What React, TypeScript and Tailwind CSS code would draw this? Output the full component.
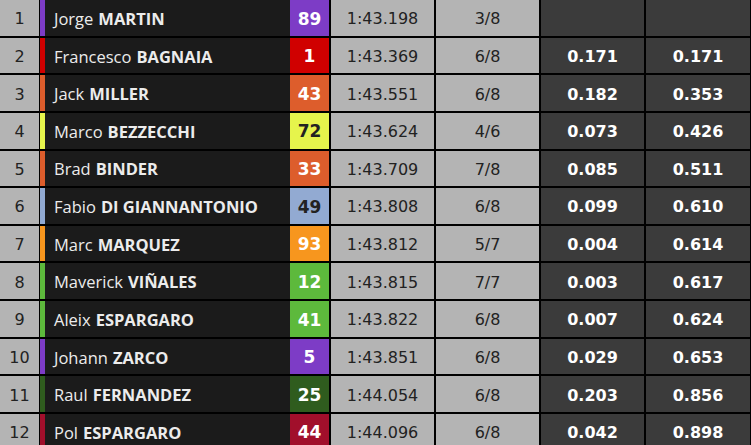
type Row = {
  pos: number;
  first: string;
  last: string;
  num: string;
  stripe: string;
  badge: string;
  time: string;
  laps: string;
  gap: string;
  total: string;
};

const rows: Row[] = [
  { pos: 1, first: "Jorge", last: "MARTIN", num: "89", stripe: "border-l-[#7d3cc6]", badge: "bg-[#7d3cc6] text-white", time: "1:43.198", laps: "3/8", gap: "", total: "" },
  { pos: 2, first: "Francesco", last: "BAGNAIA", num: "1", stripe: "border-l-[#d00000]", badge: "bg-[#d00000] text-white", time: "1:43.369", laps: "6/8", gap: "0.171", total: "0.171" },
  { pos: 3, first: "Jack", last: "MILLER", num: "43", stripe: "border-l-[#dd5d2c]", badge: "bg-[#dd5d2c] text-white", time: "1:43.551", laps: "6/8", gap: "0.182", total: "0.353" },
  { pos: 4, first: "Marco", last: "BEZZECCHI", num: "72", stripe: "border-l-[#e6f44c]", badge: "bg-[#e6f44c] text-[#222]", time: "1:43.624", laps: "4/6", gap: "0.073", total: "0.426" },
  { pos: 5, first: "Brad", last: "BINDER", num: "33", stripe: "border-l-[#dd5d2c]", badge: "bg-[#dd5d2c] text-white", time: "1:43.709", laps: "7/8", gap: "0.085", total: "0.511" },
  { pos: 6, first: "Fabio", last: "DI GIANNANTONIO", num: "49", stripe: "border-l-[#92aad2]", badge: "bg-[#92aad2] text-[#222]", time: "1:43.808", laps: "6/8", gap: "0.099", total: "0.610" },
  { pos: 7, first: "Marc", last: "MARQUEZ", num: "93", stripe: "border-l-[#f7961e]", badge: "bg-[#f7961e] text-white", time: "1:43.812", laps: "5/7", gap: "0.004", total: "0.614" },
  { pos: 8, first: "Maverick", last: "VIÑALES", num: "12", stripe: "border-l-[#5db93c]", badge: "bg-[#5db93c] text-white", time: "1:43.815", laps: "7/7", gap: "0.003", total: "0.617" },
  { pos: 9, first: "Aleix", last: "ESPARGARO", num: "41", stripe: "border-l-[#5db93c]", badge: "bg-[#5db93c] text-white", time: "1:43.822", laps: "6/8", gap: "0.007", total: "0.624" },
  { pos: 10, first: "Johann", last: "ZARCO", num: "5", stripe: "border-l-[#7d3cc6]", badge: "bg-[#7d3cc6] text-white", time: "1:43.851", laps: "6/8", gap: "0.029", total: "0.653" },
  { pos: 11, first: "Raul", last: "FERNANDEZ", num: "25", stripe: "border-l-[#2f5c1e]", badge: "bg-[#2f5c1e] text-white", time: "1:44.054", laps: "6/8", gap: "0.203", total: "0.856" },
  { pos: 12, first: "Pol", last: "ESPARGARO", num: "44", stripe: "border-l-[#a10f2b]", badge: "bg-[#a10f2b] text-white", time: "1:44.096", laps: "6/8", gap: "0.042", total: "0.898" },
];

const light = "bg-[#b4b4b4] text-[#222] font-['DejaVu_Sans',sans-serif] flex items-center justify-center pt-[3px]";
const dark = "bg-[#3b3b3b] text-white font-bold font-['DejaVu_Sans',sans-serif] text-[16px] flex items-center justify-center pt-[3px]";

export default function App() {
  return (
    <div className="w-[751px] h-[445px] overflow-hidden bg-black flex flex-col gap-[2px] text-[16px] font-['Open_Sans','Noto_Sans',sans-serif]">
      {rows.map((r) => (
        <div key={r.pos} className="flex h-[35.64px] shrink-0">
          <div className={`w-[39px] ${light}`}>{r.pos}</div>
          <div
            className={`ml-[1px] w-[250px] bg-[#1b1b1b] border-l-[5px] ${r.stripe} flex items-center pl-[9px] pt-[3px] text-[#ececec] text-[16.5px] whitespace-nowrap`}
          >
            <span>{r.first}</span>
            <span className="ml-[5px] font-bold">{r.last}</span>
          </div>
          <div
            className={`w-[39px] ${r.badge} flex items-center justify-center pt-[3px] font-bold text-[17px] font-['DejaVu_Sans',sans-serif]`}
          >
            {r.num}
          </div>
          <div className={`ml-[2px] w-[103px] ${light}`}>{r.time}</div>
          <div className={`ml-[2px] w-[103px] ${light}`}>{r.laps}</div>
          <div className={`ml-[2px] w-[103px] ${dark}`}>{r.gap}</div>
          <div className={`ml-[2px] w-[104px] ${dark}`}>{r.total}</div>
        </div>
      ))}
    </div>
  );
}
